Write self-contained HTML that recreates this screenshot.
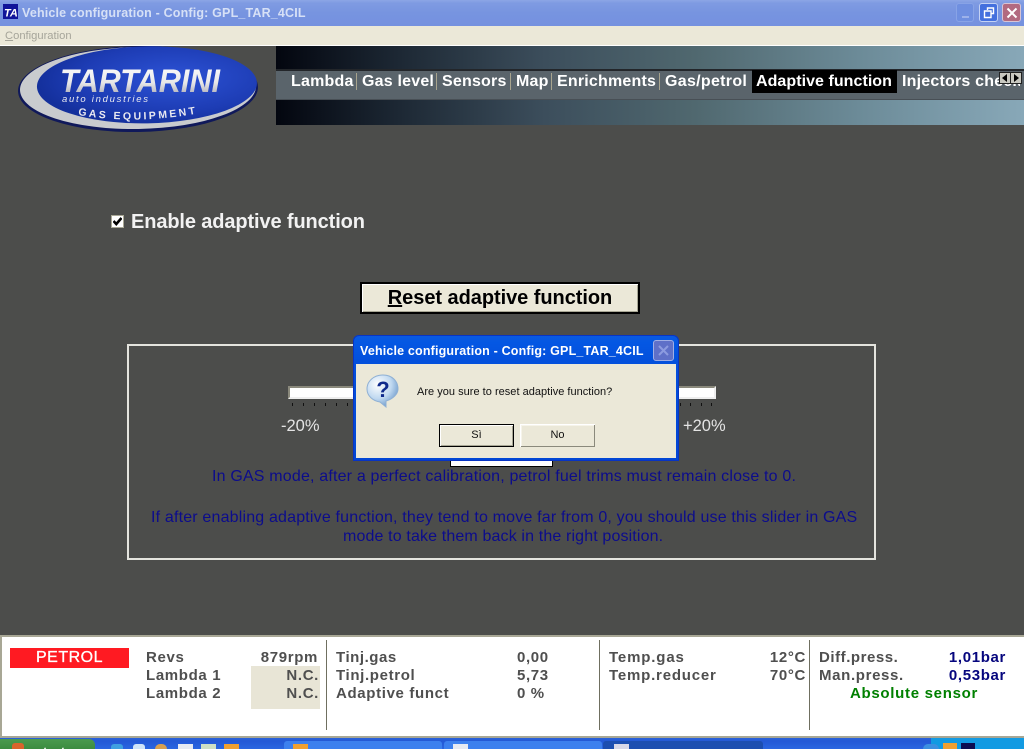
<!DOCTYPE html>
<html style="width:1024px;height:749px;overflow:hidden"><head><meta charset="utf-8">
<style>
html,body{margin:0;padding:0}
body{width:1024px;height:749px;overflow:hidden;position:relative;background:#4c4d4b;font-family:"Liberation Sans",sans-serif}
.a{position:absolute;white-space:nowrap}
.tab{position:absolute;top:73px;color:#fff;font:bold 16px/18px "Liberation Sans",sans-serif;white-space:nowrap;letter-spacing:.2px}
.sep{position:absolute;top:73px;width:1px;height:17px;background:#a8a48e}
.st{position:absolute;font:bold 15px/18px "Liberation Sans",sans-serif;color:#4f4f4f;white-space:nowrap;letter-spacing:.65px}
.bl{position:absolute;font:16px/20px "Liberation Sans",sans-serif;color:#0c0c8c;white-space:nowrap;letter-spacing:.18px}
.vl{position:absolute;top:640px;width:1px;height:90px;background:#6f6f60}
.tick{position:absolute;top:403px;width:1px;height:3px;background:#111}
</style></head><body>

<!-- title bar -->
<div class="a" style="left:0;top:0;width:1024px;height:26px;background:linear-gradient(#8ca6e6 0,#7f9be2 3px,#7794e0 50%,#7591df 100%)"></div>
<svg class="a" style="left:3px;top:4px" width="15" height="15" viewBox="0 0 15 15"><rect width="15" height="15" fill="#10149a"/><text x="1" y="12.5" font-family="Liberation Sans" font-weight="bold" font-style="italic" font-size="11" fill="#fff">TA</text></svg>
<div class="a" style="left:22px;top:5px;font:bold 12.5px/17px 'Liberation Sans',sans-serif;color:#d6e0f6;letter-spacing:.17px">Vehicle configuration - Config: GPL_TAR_4CIL</div>
<div class="a" style="left:956px;top:3px;width:18px;height:19px;box-sizing:border-box;border-radius:3px;background:#6f8fe0;border:1px solid #88a3e6"><div class="a" style="left:5px;top:12px;width:7px;height:2px;background:#9db2ea"></div></div>
<div class="a" style="left:979px;top:3px;width:19px;height:19px;box-sizing:border-box;border-radius:3px;background:#4470de;border:1px solid #c4d2f4">
<svg class="a" style="left:3px;top:3px" width="12" height="12" viewBox="0 0 12 12"><path d="M4.500 3V1h6v5.500H8M1.500 4H8v6.500H1.500z" fill="none" stroke="#fff" stroke-width="1.400"/></svg></div>
<div class="a" style="left:1002px;top:3px;width:19px;height:19px;box-sizing:border-box;border-radius:3px;background:#b26a80;border:1px solid #d8c4d4">
<svg class="a" style="left:3px;top:3px" width="12" height="12" viewBox="0 0 12 12"><path d="M1.500 1.500l9 9M10.500 1.500l-9 9" fill="none" stroke="#fff" stroke-width="2"/></svg></div>

<!-- menu -->
<div class="a" style="left:0;top:26px;width:1024px;height:19px;background:#ebe8d8;border-bottom:1px solid #fff"></div>
<div class="a" style="left:5px;top:29px;font:11.2px/14px 'Liberation Sans',sans-serif;color:#a6a59a"><u>C</u>onfiguration</div>

<!-- logo -->
<svg class="a" style="left:14px;top:44px" width="250" height="92" viewBox="0 0 250 92">
<defs>
<radialGradient id="b" cx=".62" cy=".42" r=".62"><stop offset="0" stop-color="#2d53d6"/><stop offset=".7" stop-color="#1d3cb4"/><stop offset="1" stop-color="#14309c"/></radialGradient>
<linearGradient id="t" x1="0" y1="0" x2="0" y2="1"><stop offset="0" stop-color="#fff"/><stop offset=".55" stop-color="#e8e8e8"/><stop offset="1" stop-color="#9a9aa8"/></linearGradient>
</defs>
<g transform="rotate(-1 124 45)">
<ellipse cx="124" cy="45" rx="120" ry="43" fill="#10195a"/>
<ellipse cx="124" cy="44" rx="118" ry="41" fill="#c9cbce"/>
<ellipse cx="133" cy="41" rx="110" ry="38.500" fill="url(#b)"/>
</g>
<text x="46" y="48" font-family="Liberation Sans" font-style="italic" font-weight="bold" font-size="32" fill="url(#t)" textLength="160" lengthAdjust="spacingAndGlyphs">TARTARINI</text>
<text x="48" y="58" font-family="Liberation Sans" font-style="italic" font-size="9.500" fill="#e8e8f0" textLength="86">auto industries</text>
<path id="gp" d="M64 71Q122 81 186 69" fill="none"/>
<text font-family="Liberation Sans" font-weight="bold" font-size="10.500" fill="#e8e8f0" letter-spacing="2.500"><textPath href="#gp">GAS EQUIPMENT</textPath></text>
</svg>

<!-- header band -->
<div class="a" style="left:276px;top:46px;width:748px;height:79px;background:linear-gradient(90deg,#03060f 0,#1c2733 16%,#3c4e5c 36%,#50686f 56%,#6c8b98 78%,#88a8b8 100%)"></div>
<div class="a" style="left:276px;top:69px;width:748px;height:31px;background:#5a646b;border-top:2px solid #23262a;border-bottom:1px solid #484f55;box-sizing:border-box"></div>
<div class="a" style="left:752px;top:70px;width:145px;height:23px;background:#000"></div>
<div class="tab" style="left:291px">Lambda</div><div class="sep" style="left:356px"></div>
<div class="tab" style="left:362px">Gas level</div><div class="sep" style="left:436px"></div>
<div class="tab" style="left:442px">Sensors</div><div class="sep" style="left:510px"></div>
<div class="tab" style="left:516px">Map</div><div class="sep" style="left:551px"></div>
<div class="tab" style="left:557px">Enrichments</div><div class="sep" style="left:659px"></div>
<div class="tab" style="left:665px;letter-spacing:.3px">Gas/petrol</div>
<div class="tab" style="left:756px;letter-spacing:.05px">Adaptive function</div>
<div class="tab" style="left:902px;width:118px;overflow:hidden">Injectors check</div>
<div class="a" style="left:999px;top:72px;width:10px;height:10px;background:#c8c8c0;border:1px solid #222"><svg class="a" style="left:1px;top:1px" width="8" height="8"><path d="M6 0v8L1 4z" fill="#000"/></svg></div>
<div class="a" style="left:1010px;top:72px;width:10px;height:10px;background:#c8c8c0;border:1px solid #222"><svg class="a" style="left:1px;top:1px" width="8" height="8"><path d="M2 0v8l5-4z" fill="#000"/></svg></div>

<!-- checkbox -->
<div class="a" style="left:111px;top:215px;width:13px;height:13px;background:#fff;box-sizing:border-box;border:1px solid #a8a795">
<svg class="a" style="left:1px;top:1px" width="9" height="9" viewBox="0 0 9 9"><path d="M.5 4l2.800 3L8.500 1" fill="none" stroke="#000" stroke-width="2.600"/></svg></div>
<div class="a" style="left:131px;top:210px;font:bold 20px/24px 'Liberation Sans',sans-serif;color:#f2f2f2;letter-spacing:-.12px">Enable adaptive function</div>

<!-- reset button -->
<div class="a" style="left:360px;top:282px;width:280px;height:32px;box-sizing:border-box;background:#ebe8d8;border:2px solid #000;box-shadow:inset 1px 1px 0 #fff,inset -1px -1px 0 #a8a795;text-align:center;font:bold 20px/28px 'Liberation Sans',sans-serif;color:#000;letter-spacing:-.05px"><u>R</u>eset adaptive function</div>

<!-- group box -->
<div class="a" style="left:127px;top:344px;width:749px;height:216px;box-sizing:border-box;border:2px solid #e4e4de"></div>

<!-- slider -->
<div class="a" style="left:288px;top:386px;width:428px;height:13px;box-sizing:border-box;background:#fff;border:2px solid;border-color:#8a897c #eee #eee #8a897c"></div>
<div class="tick" style="left:292px"></div><div class="tick" style="left:303px"></div><div class="tick" style="left:314px"></div><div class="tick" style="left:325px"></div><div class="tick" style="left:336px"></div><div class="tick" style="left:347px"></div>
<div class="tick" style="left:680px"></div><div class="tick" style="left:690px"></div><div class="tick" style="left:701px"></div><div class="tick" style="left:711px"></div>
<div class="a" style="left:281px;top:416px;font:16.500px/20px 'Liberation Sans',sans-serif;color:#e4e4e4">-20%</div>
<div class="a" style="left:683px;top:416px;font:16.500px/20px 'Liberation Sans',sans-serif;color:#e4e4e4">+20%</div>
<div class="a" style="left:450px;top:459px;width:103px;height:8px;box-sizing:border-box;background:#fff;border:1px solid #000"></div>

<!-- blue text -->
<div class="bl" style="left:212px;top:467px">In GAS mode, after a perfect calibration, petrol fuel trims must remain close to 0.</div>
<div class="bl" style="left:151px;top:508px">If after enabling adaptive function, they tend to move far from 0, you should use this slider in GAS</div>
<div class="bl" style="left:343px;top:527px;letter-spacing:.14px">mode to take them back in the right position.</div>

<!-- dialog -->
<div class="a" style="left:353px;top:335px;width:326px;height:126px;box-sizing:border-box;background:linear-gradient(#0a5ae0 0,#0457e3 8px,#0350dc 26px,#0246d4 100%);border-radius:6px 6px 0 0;box-shadow:inset 0 0 0 1px #0834c4"></div>
<div class="a" style="left:356px;top:364px;width:320px;height:94px;background:#ebe8d8"></div>
<div class="a" style="left:360px;top:343px;font:bold 12.500px/17px 'Liberation Sans',sans-serif;color:#fff;letter-spacing:.17px">Vehicle configuration - Config: GPL_TAR_4CIL</div>
<div class="a" style="left:653px;top:340px;width:21px;height:21px;box-sizing:border-box;border-radius:3px;background:#5f70c8;border:1px solid #a0aee4">
<svg class="a" style="left:4px;top:4px" width="11" height="11" viewBox="0 0 11 11"><path d="M1 1l9 9M10 1l-9 9" fill="none" stroke="#8d9be0" stroke-width="2"/></svg></div>
<svg class="a" style="left:366px;top:374px" width="34" height="34" viewBox="0 0 34 34">
<defs><radialGradient id="q" cx=".35" cy=".3" r=".8"><stop offset="0" stop-color="#fff"/><stop offset=".55" stop-color="#bfd8f0"/><stop offset="1" stop-color="#5f8fc4"/></radialGradient></defs>
<path d="M17 1C8 1 1 7 1 15c0 7 6 12 13 13l6 5 0-6c7-2 12-7 12-12C32 7 26 1 17 1z" fill="url(#q)" stroke="#8fb0d4"/>
<text x="17" y="23" text-anchor="middle" font-family="Liberation Sans" font-weight="bold" font-size="22" fill="#0f2a8c">?</text></svg>
<div class="a" style="left:417px;top:385px;font:11px/14px 'Liberation Sans',sans-serif;color:#111;letter-spacing:.02px">Are you sure to reset adaptive function?</div>
<div class="a" style="left:439px;top:424px;width:75px;height:23px;box-sizing:border-box;background:#ebe8d8;border:1px solid #000;box-shadow:inset 1px 1px 0 #fff,inset -1px -1px 0 #a8a795;text-align:center;font:11px/21px 'Liberation Sans',sans-serif;color:#111">Sì</div>
<div class="a" style="left:520px;top:424px;width:75px;height:23px;box-sizing:border-box;background:#ebe8d8;box-shadow:inset 1px 1px 0 #fff,inset -1px -1px 0 #8a897c,inset 2px 2px 0 #f6f4ea;text-align:center;font:11px/23px 'Liberation Sans',sans-serif;color:#111">No</div>

<!-- status panel -->
<div class="a" style="left:0;top:635px;width:1024px;height:103px;box-sizing:border-box;background:#fff;border:1px solid #a8a795;border-width:2px 0 2px 2px"></div>
<div class="a" style="left:10px;top:648px;width:119px;height:20px;background:#ff1a22;color:#fff;text-align:center;font:16px/19px 'Liberation Sans',sans-serif;letter-spacing:.5px;-webkit-text-stroke:.3px #fff">PETROL</div>
<div class="a" style="left:251px;top:666px;width:69px;height:43px;background:#e8e5d6"></div>
<div class="vl" style="left:326px"></div><div class="vl" style="left:599px"></div><div class="vl" style="left:809px"></div>
<div class="st" style="left:146px;top:649px">Revs</div>
<div class="st" style="left:146px;top:667px">Lambda 1</div>
<div class="st" style="left:146px;top:685px">Lambda 2</div>
<div class="st" style="right:706px;top:649px">879rpm</div>
<div class="st" style="right:705px;top:667px">N.C.</div>
<div class="st" style="right:705px;top:685px">N.C.</div>
<div class="st" style="left:336px;top:649px;letter-spacing:.55px">Tinj.gas</div>
<div class="st" style="left:336px;top:667px">Tinj.petrol</div>
<div class="st" style="left:336px;top:685px">Adaptive funct</div>
<div class="st" style="left:517px;top:649px">0,00</div>
<div class="st" style="left:517px;top:667px">5,73</div>
<div class="st" style="left:517px;top:685px">0 %</div>
<div class="st" style="left:609px;top:649px;letter-spacing:.85px">Temp.gas</div>
<div class="st" style="left:609px;top:667px;letter-spacing:.8px">Temp.reducer</div>
<div class="st" style="right:218px;top:649px">12°C</div>
<div class="st" style="right:218px;top:667px">70°C</div>
<div class="st" style="left:819px;top:649px;letter-spacing:.55px">Diff.press.</div>
<div class="st" style="left:819px;top:667px">Man.press.</div>
<div class="st" style="right:18px;top:649px;color:#06067e">1,01bar</div>
<div class="st" style="right:18px;top:667px;color:#06067e">0,53bar</div>
<div class="st" style="left:850px;top:685px;color:#008000;letter-spacing:.7px">Absolute sensor</div>

<!-- taskbar -->
<div class="a" style="left:0;top:738px;width:1024px;height:11px;background:linear-gradient(#2a62d8,#2358d6 3px,#2a66e0)"></div>
<div class="a" style="left:0;top:739px;width:95px;height:10px;background:linear-gradient(#4a9a4e,#3c8c40);border-radius:0 6px 0 0"></div>
<div class="a" style="left:12px;top:743px;width:12px;height:6px;background:#d8642c;border-radius:3px 3px 0 0"></div>
<div class="a" style="left:0;top:738px;width:1024px;height:11px;overflow:hidden"><div class="a" style="left:35px;top:7px;font:bold 14px/14px 'Liberation Sans',sans-serif;color:#fff">start</div></div>
<div class="a" style="left:111px;top:744px;width:12px;height:5px;background:#3fa0e0;border-radius:3px 3px 0 0"></div>
<div class="a" style="left:133px;top:744px;width:12px;height:5px;background:#cfe4f8;border-radius:3px 3px 0 0"></div>
<div class="a" style="left:155px;top:744px;width:12px;height:5px;background:#d8a050;border-radius:6px 6px 0 0"></div>
<div class="a" style="left:178px;top:744px;width:15px;height:5px;background:#e6eaf2"></div>
<div class="a" style="left:201px;top:744px;width:15px;height:5px;background:#cfe0c4"></div>
<div class="a" style="left:224px;top:744px;width:15px;height:5px;background:#f0a030"></div>
<div class="a" style="left:284px;top:741px;width:158px;height:8px;background:#3c80ee;border-radius:3px 3px 0 0"></div>
<div class="a" style="left:293px;top:744px;width:15px;height:5px;background:#f0a030"></div>
<div class="a" style="left:444px;top:741px;width:158px;height:8px;background:#3c80ee;border-radius:3px 3px 0 0"></div>
<div class="a" style="left:453px;top:744px;width:15px;height:5px;background:#e6eaf2"></div>
<div class="a" style="left:603px;top:741px;width:160px;height:8px;background:#1c4eb0;border-radius:3px 3px 0 0"></div>
<div class="a" style="left:614px;top:744px;width:15px;height:5px;background:#d8d8e8"></div>
<div class="a" style="left:931px;top:738px;width:93px;height:11px;background:#129ae2"></div>
<div class="a" style="left:923px;top:744px;width:16px;height:5px;background:#3c90e0;border-radius:8px 8px 0 0"></div>
<div class="a" style="left:943px;top:743px;width:14px;height:6px;background:#f0a030"></div>
<div class="a" style="left:961px;top:743px;width:14px;height:6px;background:#0c0c50"></div>
</body></html>
